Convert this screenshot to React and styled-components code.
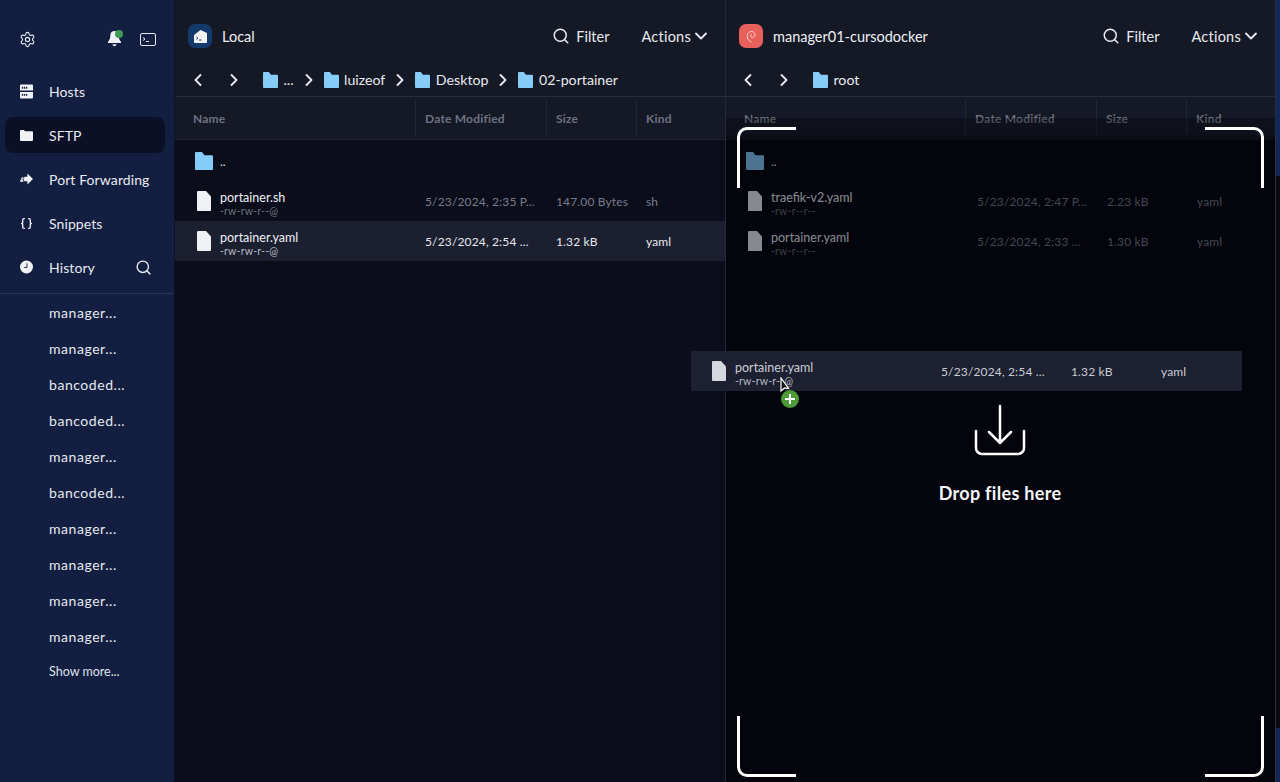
import React from 'react'
import styled, { createGlobalStyle } from 'styled-components'
import { Search, ChevronLeft, ChevronRight, ChevronDown, Settings, Braces } from 'lucide-react'

const Global = createGlobalStyle`
  html, body { margin: 0; padding: 0; height: 100%; background: #0b0d1b; }
  #root { height: 782px; }
  * { box-sizing: border-box; }
  body { font-family: Lato, "Open Sans", sans-serif; overflow: hidden; }
`

const Shell = styled.div`
  display: flex;
  width: 1280px;
  height: 782px;
  overflow: hidden;
  color: #eef0f5;
`

const Side = styled.aside`
  width: 175px;
  flex: none;
  background: #131f40;
  border-right: 1px solid #0c1226;
  display: flex;
  flex-direction: column;
`

const SideTop = styled.div`
  height: 73px;
  padding: 5px 18px 0 19px;
  display: flex;
  align-items: center;
  color: #e6e9f0;
`

const Spacer = styled.div`
  flex: 1;
`

const BellWrap = styled.span`
  position: relative;
  display: flex;
  margin-right: 19px;
  &::after {
    content: '';
    position: absolute;
    top: -1px;
    right: -2px;
    width: 8px;
    height: 8px;
    border-radius: 50%;
    background: #3f9b55;
  }
`

const NavItem = styled.div`
  height: 36px;
  margin: 0 9px 8px 5px;
  padding: 0 13px 0 15px;
  display: flex;
  align-items: center;
  gap: 16px;
  border-radius: 8px;
  font-size: 14px;
  letter-spacing: 0.1px;
  color: #e8eaf0;
  background: ${({ $active }) => ($active ? '#0b1026' : 'transparent')};
`

const NavIcon = styled.span`
  width: 13px;
  display: flex;
  justify-content: center;
  flex: none;
`

const NavList = styled.nav`
  display: flex;
  flex-direction: column;
`

const Rule = styled.div`
  height: 1px;
  background: #29345a;
`

const Recent = styled.div`
  display: flex;
  flex-direction: column;
`

const RecentItem = styled.div`
  height: 36px;
  padding-left: 49px;
  display: flex;
  align-items: center;
  font-size: 14px;
  letter-spacing: 0.55px;
  color: #e6e9f0;
`

const ShowMore = styled.div`
  padding: 10px 0 0 49px;
  font-size: 12.5px;
  color: #dfe2ea;
`

const Panel = styled.section`
  position: relative;
  flex: ${({ $right }) => ($right ? '1' : 'none')};
  width: ${({ $right }) => ($right ? 'auto' : '551px')};
  display: flex;
  flex-direction: column;
  background: #0b0d1b;
  border-right: ${({ $right }) => ($right ? 'none' : '1px solid #262a36')};
`

const PanelHead = styled.header`
  height: 97px;
  flex: none;
  background: #151926;
  display: flex;
  flex-direction: column;
`

const TitleRow = styled.div`
  height: 71px;
  padding: 1px ${({ $right }) => ($right ? '19px' : '14px')} 0 13px;
  display: flex;
  align-items: center;
  font-size: 14.5px;
`

const HostBadge = styled.span`
  width: 24px;
  height: 24px;
  border-radius: 7px;
  margin-right: 10px;
  background: ${({ $bg }) => $bg};
  display: flex;
  align-items: center;
  justify-content: center;
`

const FilterButton = styled.span`
  display: flex;
  align-items: center;
  gap: 6px;
  color: #e8eaf0;
`

const ActionsButton = styled.span`
  display: flex;
  align-items: center;
  margin-left: 32px;
  letter-spacing: 0.25px;
  color: #e8eaf0;
`

const Crumbs = styled.div`
  height: 17px;
  padding-left: ${({ $right }) => ($right ? '12px' : '13px')};
  display: flex;
  align-items: center;
  font-size: 14.2px;
  color: #e8eaf0;
`

const CrumbSep = styled.span`
  display: flex;
  margin: 0 5px;
`

const NavArrows = styled.span`
  display: flex;
  gap: 16px;
  margin-right: 19px;
`

const CrumbName = styled.span`
  margin-left: 5.5px;
`

const HeadRule = styled.div`
  height: 1px;
  margin-top: 8px;
  background: #2a2e3a;
`

const Columns = styled.div`
  height: 43px;
  flex: none;
  padding-left: 18px;
  display: grid;
  grid-template-columns: ${({ $cols }) => $cols};
  align-items: center;
  font-size: 12px;
  font-weight: 700;
  letter-spacing: 0.2px;
  color: #6e7280;
  background: #151926;
  border-bottom: 1px solid #20242f;
`

const Cell = styled.div`
  height: 36px;
  display: flex;
  align-items: center;
  border-right: 1px solid #23273a;
  padding-left: ${({ $first }) => ($first ? 0 : 9)}px;
  &:last-child {
    border-right: none;
  }
`

const Rows = styled.div`
  position: relative;
  z-index: 1;
  opacity: ${({ $dim }) => ($dim ? 0.56 : 1)};
`

const Row = styled.div`
  height: 40px;
  padding-left: ${({ $pad }) => $pad}px;
  display: grid;
  grid-template-columns: ${({ $cols }) => $cols};
  align-items: center;
  font-size: 12px;
  letter-spacing: 0.15px;
  color: ${({ $on }) => ($on ? '#e8eaf0' : '#787c8a')};
  background: ${({ $on }) => ($on ? '#1c1f2f' : 'transparent')};
`

const NameCell = styled.div`
  display: flex;
  align-items: center;
  gap: 9px;
`

const NameStack = styled.div`
  padding-top: 6px;
`

const FileName = styled.div`
  font-size: 12.5px;
  line-height: 14px;
  letter-spacing: 0;
  color: #eef0f5;
`

const Perm = styled.div`
  font-size: 10.5px;
  line-height: 12px;
  letter-spacing: 0.2px;
  color: ${({ $on }) => ($on ? '#b5b8c4' : '#6c707e')};
`

const UpRow = styled.div`
  height: 40px;
  margin-top: 1px;
  padding-left: 20px;
  display: flex;
  align-items: center;
  gap: 7px;
  font-size: 12px;
`

const Shade = styled.div`
  position: absolute;
  left: 0;
  right: 0;
  top: 118px;
  bottom: 0;
  background: linear-gradient(
    rgba(0, 0, 6, 0.32) 0,
    rgba(0, 0, 6, 0.32) 15px,
    rgba(0, 0, 6, 0.72) 24px
  );
`

const Frame = styled.span`
  position: absolute;
  width: 59px;
  height: 61px;
  ${({ $v }) => $v}: ${({ $v }) => ($v === 'top' ? 127 : 5)}px;
  ${({ $h }) => $h}: ${({ $h }) => ($h === 'left' ? 11 : 16)}px;
  border-${({ $v }) => $v}: 3px solid #fff;
  border-${({ $h }) => $h}: 3px solid #fff;
  border-${({ $v }) => $v}-${({ $h }) => $h}-radius: 10px;
`

const Drop = styled.div`
  position: absolute;
  left: 0;
  width: 548px;
  top: 404px;
  display: flex;
  flex-direction: column;
  align-items: center;
  gap: 26px;
  font-size: 18px;
  font-weight: 700;
  letter-spacing: 0.3px;
  color: #f4f5f8;
`

const Ghost = styled.div`
  position: absolute;
  left: 691px;
  top: 351px;
  width: 551px;
  height: 40px;
  padding-left: 21px;
  display: grid;
  grid-template-columns: 229px 130px 90px 1fr;
  align-items: center;
  font-size: 12px;
  letter-spacing: 0.15px;
  color: #c9ccd6;
  background: #1d2031;
`

const GhostName = styled(FileName)`
  color: #c9ccd6;
`

const Pointer = styled.svg`
  position: absolute;
  left: 780px;
  top: 377px;
`

const PlusBadge = styled.span`
  position: absolute;
  left: 781px;
  top: 390px;
  width: 18px;
  height: 18px;
  border-radius: 50%;
  background: #4c9a38;
  color: #fff;
  display: flex;
  align-items: center;
  justify-content: center;
`

const EdgeStrip = styled.div`
  position: absolute;
  right: 0;
  top: 0;
  width: 5px;
  height: 782px;
  border-left: 1px solid #2c2f3a;
  background: linear-gradient(
    #12285c 0,
    #12285c 176px,
    #0b0b0f 176px,
    #0b0b0f 728px,
    #12285c 728px
  );
`

const Folder = ({ width = 18, height = 18, color = '#85ccf9' }) => (
  <svg width={width} height={height} viewBox="0 0 18 18" preserveAspectRatio="none">
    <path d="M0 1a1 1 0 0 1 1-1h6l2.500 3.200H17a1 1 0 0 1 1 1V17a1 1 0 0 1-1 1H1a1 1 0 0 1-1-1z" fill={color} />
  </svg>
)

const CrumbFolder = () => <Folder width={15} height={16} />

const Doc = ({ color = '#f0f1f4' }) => (
  <svg width="14" height="20" viewBox="0 0 14 20">
    <path d="M1 0h8l5 5.500V19a1 1 0 0 1-1 1H1a1 1 0 0 1-1-1V1a1 1 0 0 1 1-1z" fill={color} />
  </svg>
)

const BellIcon = () => (
  <svg width="13" height="16" viewBox="0 0 13 16" fill="#f0f2f6">
    <path d="M6.500 0C3.800 0 2.300 2 2.300 4.600c0 3-.8 4.500-2.300 6.400v1h13v-1c-1.500-1.900-2.300-3.400-2.300-6.400C10.700 2 9.200 0 6.500 0z" />
    <path d="M4.500 13.200h4a2 2 0 0 1-4 0z" />
  </svg>
)

const TerminalIcon = () => (
  <svg width="16" height="13" viewBox="0 0 16 13" fill="none" stroke="#e6e9f0">
    <rect x="0.500" y="0.500" width="15" height="12" rx="1.500" />
    <path d="M3 4.500l2 1.500-2 1.500M6 8.500h3" />
  </svg>
)

const HostsIcon = () => (
  <svg width="14" height="15" viewBox="0 0 14 15" fill="#f0f2f6">
    <path d="M0 1a1 1 0 0 1 1-1h12a1 1 0 0 1 1 1v5.500H0zM0 8h14v6a1 1 0 0 1-1 1H1a1 1 0 0 1-1-1z" />
    <path d="M2 2.500h1.400v2H2zm2.200 0h1.400v2H4.200zm2.200 0h1.400v2H6.400zM2 10.200h1.400v2H2zm2.200 0h1.400v2H4.200zm2.200 0h1.400v2H6.400z" fill="#131f40" />
  </svg>
)

const FolderSmall = () => (
  <svg width="13" height="11" viewBox="0 0 13 11" fill="#f0f2f6">
    <path d="M0 1a1 1 0 0 1 1-1h3l1 1.300h7a1 1 0 0 1 1 1V10a1 1 0 0 1-1 1H1a1 1 0 0 1-1-1z" />
  </svg>
)

const ForwardIcon = () => (
  <svg width="14" height="12" viewBox="0 0 14 12" fill="#f0f2f6">
    <path d="M8 0l6 6-6 6V8.500H5L3.500 6.200 5 3.500h3zM0 9l2-5h2L2.500 6.200 4 9z" />
  </svg>
)

const ClockIcon = () => (
  <svg width="14" height="14" viewBox="0 0 14 14">
    <circle cx="7" cy="7" r="7" fill="#f0f2f6" />
    <path d="M7.500 3v4.500H4.500" stroke="#131f40" strokeWidth="1" fill="none" />
  </svg>
)

const LocalIcon = () => (
  <svg width="13" height="13" viewBox="0 0 13 13">
    <path d="M0 5l6.500-5L13 3v9a1 1 0 0 1-1 1H1a1 1 0 0 1-1-1z" fill="#f2f4f8" />
    <path d="M2.500 7l1.500 1.200L2.500 9.400M5 10h2.500" stroke="#1a3a68" strokeWidth="1" fill="none" />
  </svg>
)

const DebianIcon = () => (
  <svg width="12" height="14" viewBox="0 0 12 14" fill="none" stroke="#ffd9d5" strokeWidth="1">
    <path d="M6.500 13C3 11.500 1.500 9 2.500 5.500 3.500 2.500 7 1.500 9 3.500c2 2 1 5-1.500 5S5 6 7 5.500" />
  </svg>
)

const DropIcon = () => (
  <svg width="52" height="52" viewBox="0 0 52 52" fill="none" stroke="#fff" strokeWidth="2.500" strokeLinecap="round" strokeLinejoin="round">
    <path d="M26 2v37M15 28l11 11 11-11" />
    <path d="M2 27v17a6 6 0 0 0 6 6h36a6 6 0 0 0 6-6V27" />
  </svg>
)

const leftCols = '228px 131px 90px 1fr'
const rightCols = '229px 130px 90px 1fr'
const headLeft = '223px 131px 90px 1fr'
const headRight = '222px 131px 90px 1fr'

const ColumnHead = ({ cols }) => (
  <Columns $cols={cols}>
    <Cell $first>Name</Cell>
    <Cell>Date Modified</Cell>
    <Cell>Size</Cell>
    <Cell>Kind</Cell>
  </Columns>
)

const FileRow = ({ name, perm, date, size, kind, on, cols, pad }) => (
  <Row $on={on} $cols={cols} $pad={pad}>
    <NameCell>
      <Doc />
      <NameStack>
        <FileName>{name}</FileName>
        <Perm $on={on}>{perm}</Perm>
      </NameStack>
    </NameCell>
    <div>{date}</div>
    <div>{size}</div>
    <div>{kind}</div>
  </Row>
)

const Chev = () => (
  <CrumbSep>
    <ChevronRight size={20} strokeWidth={2.2} />
  </CrumbSep>
)

const HeadActions = () => (
  <>
    <FilterButton><Search size={18} strokeWidth={2} />Filter</FilterButton>
    <ActionsButton>Actions<ChevronDown size={20} strokeWidth={2.2} /></ActionsButton>
  </>
)

const Arrows = () => (
  <NavArrows>
    <ChevronLeft size={20} strokeWidth={2.2} />
    <ChevronRight size={20} strokeWidth={2.2} />
  </NavArrows>
)

const recent = ['manager...', 'manager...', 'bancoded...', 'bancoded...', 'manager...', 'bancoded...', 'manager...', 'manager...', 'manager...', 'manager...']

export default function App() {
  return (
    <Shell>
      <Global />
      <Side>
        <SideTop>
          <Settings size={17} strokeWidth={1.6} />
          <Spacer />
          <BellWrap><BellIcon /></BellWrap>
          <TerminalIcon />
        </SideTop>
        <NavList>
          <NavItem><NavIcon><HostsIcon /></NavIcon>Hosts</NavItem>
          <NavItem $active><NavIcon><FolderSmall /></NavIcon>SFTP</NavItem>
          <NavItem><NavIcon><ForwardIcon /></NavIcon>Port Forwarding</NavItem>
          <NavItem><NavIcon><Braces size={15} strokeWidth={2.6} /></NavIcon>Snippets</NavItem>
          <NavItem>
            <NavIcon><ClockIcon /></NavIcon>History<Spacer /><Search size={17} strokeWidth={2} />
          </NavItem>
        </NavList>
        <Rule />
        <Recent>
          {recent.map((r, i) => <RecentItem key={i}>{r}</RecentItem>)}
          <ShowMore>Show more...</ShowMore>
        </Recent>
      </Side>

      <Panel>
        <PanelHead>
          <TitleRow>
            <HostBadge $bg="#143a6b"><LocalIcon /></HostBadge>
            Local
            <Spacer />
            <HeadActions />
          </TitleRow>
          <Crumbs>
            <Arrows />
            <CrumbFolder /><CrumbName>...</CrumbName><Chev />
            <CrumbFolder /><CrumbName>luizeof</CrumbName><Chev />
            <CrumbFolder /><CrumbName>Desktop</CrumbName><Chev />
            <CrumbFolder /><CrumbName>02-portainer</CrumbName>
          </Crumbs>
          <HeadRule />
        </PanelHead>
        <ColumnHead cols={headLeft} />
        <Rows>
          <UpRow><Folder />..</UpRow>
          <FileRow pad={22} cols={leftCols} name="portainer.sh" perm="-rw-rw-r--@" date="5/23/2024, 2:35 P..." size="147.00 Bytes" kind="sh" />
          <FileRow on pad={22} cols={leftCols} name="portainer.yaml" perm="-rw-rw-r--@" date="5/23/2024, 2:54 ..." size="1.32 kB" kind="yaml" />
        </Rows>
      </Panel>

      <Panel $right>
        <PanelHead>
          <TitleRow $right>
            <HostBadge $bg="#e8605a"><DebianIcon /></HostBadge>
            manager01-cursodocker
            <Spacer />
            <HeadActions />
          </TitleRow>
          <Crumbs $right>
            <Arrows />
            <CrumbFolder /><CrumbName>root</CrumbName>
          </Crumbs>
          <HeadRule />
        </PanelHead>
        <ColumnHead cols={headRight} />
        <Rows $dim>
          <UpRow><Folder />..</UpRow>
          <FileRow pad={22} cols={rightCols} name="traefik-v2.yaml" perm="-rw-r--r--" date="5/23/2024, 2:47 P..." size="2.23 kB" kind="yaml" />
          <FileRow pad={22} cols={rightCols} name="portainer.yaml" perm="-rw-r--r--" date="5/23/2024, 2:33 ..." size="1.30 kB" kind="yaml" />
        </Rows>
        <Shade />
        <Frame $v="top" $h="left" />
        <Frame $v="top" $h="right" />
        <Frame $v="bottom" $h="left" />
        <Frame $v="bottom" $h="right" />
        <Drop><DropIcon />Drop files here</Drop>
      </Panel>

      <Ghost>
        <NameCell>
          <Doc color="#d5d7de" />
          <NameStack>
            <GhostName>portainer.yaml</GhostName>
            <Perm $on>-rw-rw-r--@</Perm>
          </NameStack>
        </NameCell>
        <div>5/23/2024, 2:54 ...</div>
        <div>1.32 kB</div>
        <div>yaml</div>
      </Ghost>
      <Pointer width="12" height="18" viewBox="0 0 12 18">
        <path d="M1 1v13l3.500-3 4 .5z" fill="#111" stroke="#fff" strokeWidth="1.200" />
      </Pointer>
      <PlusBadge>
        <svg width="10" height="10" viewBox="0 0 10 10"><path d="M5 0v10M0 5h10" stroke="#fff" strokeWidth="2" /></svg>
      </PlusBadge>
      <EdgeStrip />
    </Shell>
  )
}
